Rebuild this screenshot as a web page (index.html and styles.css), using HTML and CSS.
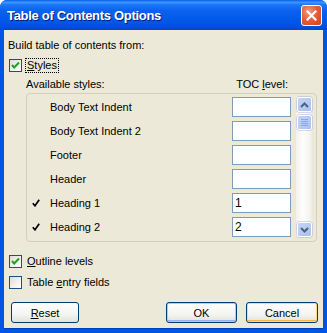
FILE: index.html
```html
<!DOCTYPE html>
<html>
<head>
<meta charset="utf-8">
<link rel="stylesheet" href="styles.css">
</head>
<body>
<div class="window">
  <div class="titlebar">
    <span class="title">Table of Contents Options</span>
    <span class="close"><svg width="11" height="11" viewBox="0 0 11 11"><path d="M1.5 1.5 L9.5 9.5 M9.5 1.5 L1.5 9.5" stroke="#fff" stroke-width="2.2" stroke-linecap="square"/></svg></span>
  </div>
  <div class="content">
    <div class="line first">Build table of contents from:</div>
    <div class="checkrow styles-row">
      <span class="cb checked"><svg width="9" height="9" viewBox="0 0 9 9"><path d="M1 4 L3.2 6.5 L8 1.5" fill="none" stroke="#21a121" stroke-width="2"/></svg></span>
      <span class="label focus"><u>S</u>tyles</span>
    </div>
    <div class="header-row">
      <span>Available styles:</span>
      <span class="toc">TOC <u>l</u>evel:</span>
    </div>
    <div class="group">
      <div class="list">
        <div class="row"><span class="mark"></span><span class="name">Body Text Indent</span><span class="box"></span></div>
        <div class="row"><span class="mark"></span><span class="name">Body Text Indent 2</span><span class="box"></span></div>
        <div class="row"><span class="mark"></span><span class="name">Footer</span><span class="box"></span></div>
        <div class="row"><span class="mark"></span><span class="name">Header</span><span class="box"></span></div>
        <div class="row"><span class="mark"><svg width="8" height="8" viewBox="0 0 8 8"><path d="M0.8 4.2 L3 6.8 L7.2 0.8" fill="none" stroke="#000" stroke-width="1.7"/></svg></span><span class="name">Heading 1</span><span class="box">1</span></div>
        <div class="row"><span class="mark"><svg width="8" height="8" viewBox="0 0 8 8"><path d="M0.8 4.2 L3 6.8 L7.2 0.8" fill="none" stroke="#000" stroke-width="1.7"/></svg></span><span class="name">Heading 2</span><span class="box">2</span></div>
      </div>
      <div class="scrollbar">
        <span class="sbtn"><svg width="9" height="6" viewBox="0 0 9 6"><path d="M1 5 L4.5 1.5 L8 5" fill="none" stroke="#4d6185" stroke-width="2"/></svg></span>
        <span class="thumb"><i></i><i></i><i></i><i></i></span>
        <span class="track"></span>
        <span class="sbtn"><svg width="9" height="6" viewBox="0 0 9 6"><path d="M1 1 L4.5 4.5 L8 1" fill="none" stroke="#4d6185" stroke-width="2"/></svg></span>
      </div>
    </div>
    <div class="checkrow outline-row">
      <span class="cb checked"><svg width="9" height="9" viewBox="0 0 9 9"><path d="M1 4 L3.2 6.5 L8 1.5" fill="none" stroke="#21a121" stroke-width="2"/></svg></span>
      <span class="label"><u>O</u>utline levels</span>
    </div>
    <div class="checkrow entry-row">
      <span class="cb"></span>
      <span class="label">Table <u>e</u>ntry fields</span>
    </div>
    <div class="buttons">
      <span class="btn reset"><u>R</u>eset</span>
      <span class="spacer"></span>
      <span class="btn ok">OK</span>
      <span class="btn cancel">Cancel</span>
    </div>
  </div>
</div>
</body>
</html>
```
FILE: styles.css
```css
html, body { margin: 0; padding: 0; background: #fff; }
body { font-family: "Liberation Sans", Arial, sans-serif; font-size: 11px; color: #000; }
.window {
  width: 327px; height: 333px; box-sizing: border-box;
  display: flex; flex-direction: column;
  background: #0055e5;
  border-radius: 7px 7px 0 0;
  overflow: hidden;
}
.titlebar {
  height: 30px; flex: none;
  display: flex; align-items: center;
  padding: 0 5px 0 7px;
  background: linear-gradient(#0a5fea 0%, #3d95ff 8%, #1a77f8 16%, #0a62ee 35%, #0058e8 70%, #0050dc 90%, #0046c8 100%);
}
.title {
  flex: 1; color: #fff; font-weight: bold; font-size: 13px;
  font-family: "Liberation Sans", Arial, sans-serif; letter-spacing: -0.3px;
  text-shadow: 1px 1px 0 #0a1883;
  padding-top: 1px;
}
.close {
  width: 19px; height: 19px; border: 1px solid #fff; border-radius: 3px;
  display: flex; align-items: center; justify-content: center;
  background: radial-gradient(circle at 35% 30%, #f09a7c 0%, #e2613c 45%, #c7441e 100%);
  margin-top: 1px;
}
.content {
  flex: 1; background: #ece9d8;
  margin: 0 4px 4px 4px;
  padding-left: 4px;
  display: flex; flex-direction: column;
  border-bottom: 1px solid #003fba;
}
.line.first { margin-top: 8px; height: 14px; line-height: 14px; }
.checkrow { display: flex; align-items: center; height: 15px; }
.styles-row { margin-top: 6px; }
.cb {
  width: 11px; height: 11px; margin-left: 1px; flex: none;
  border: 1px solid #1c5180;
  background: linear-gradient(135deg, #dcdcd7 0%, #f6f6f4 70%, #fff 100%);
  display: flex; align-items: center; justify-content: center;
}
.label { margin-left: 4px; padding: 0 1px; line-height: 13px; }
.label.focus { outline: 1px dotted #000; outline-offset: 0; }
.header-row { margin-top: 4px; height: 14px; line-height: 14px; display: flex; padding-left: 18px; }
.header-row .toc { margin-left: auto; margin-right: 35px; }
.group {
  margin-top: 2px; margin-left: 18px; width: 291px; height: 149px; box-sizing: border-box;
  border: 1px solid #d0d0bf; border-radius: 4px;
  display: flex; padding: 3px 3px 0 0;
}
.list { flex: 1; display: flex; flex-direction: column; }
.row { height: 24.4px; display: flex; align-items: flex-start; }
.mark { width: 8px; margin-left: 5px; height: 20px; display: flex; align-items: center; }
.name { flex: 1; margin-left: 10px; line-height: 20px; }
.box {
  width: 55px; height: 18px; border: 1px solid #7f9db9; background: #fff;
  line-height: 18px; padding-left: 2px; box-sizing: content-box; margin-right: 5px;
  font-size: 12px;
}
.scrollbar {
  width: 17px; height: 140px; display: flex; flex-direction: column; align-items: center;
  background: linear-gradient(90deg, #f3f1ec 0%, #fefefe 40%, #f5f4ef 80%, #e9e7dc 100%);
}
.sbtn, .thumb {
  width: 13px; height: 13px; border: 1px solid #fff; border-radius: 2px; flex: none;
  background: linear-gradient(135deg, #c6d3f7 0%, #b9cbf3 50%, #a9c0f2 100%);
  box-shadow: 0 0 0 0.5px #a8b8dc;
  display: flex; align-items: center; justify-content: center; flex-direction: column;
}
.thumb { margin-top: 3px; height: 13px; gap: 1px; }
.thumb i { display: block; width: 7px; height: 0; border-bottom: 1px solid #8ca5e5; }
.track { flex: 1; }
.outline-row { margin-top: 12px; }
.entry-row { margin-top: 6px; }
.buttons { display: flex; margin-top: 12px; padding-left: 3px; height: 21px; }
.btn {
  height: 19px; border: 1px solid #003c74; border-radius: 3px; box-sizing: content-box;
  background: linear-gradient(#fefefe 0%, #f4f4f0 60%, #e3e2da 100%);
  display: flex; align-items: center; justify-content: center;
}
.reset { width: 66px; }
.spacer { flex: 1; }
.ok { width: 69px; box-shadow: inset 0 0 0 1px #b4c8f0, inset 0 -1px 0 1px #98b4ec; }
.cancel { width: 70px; margin-left: 9px; margin-right: 5px; box-shadow: inset 0 0 0 1px #fdd889, inset 0 -1px 0 1px #f6b545; }
```
